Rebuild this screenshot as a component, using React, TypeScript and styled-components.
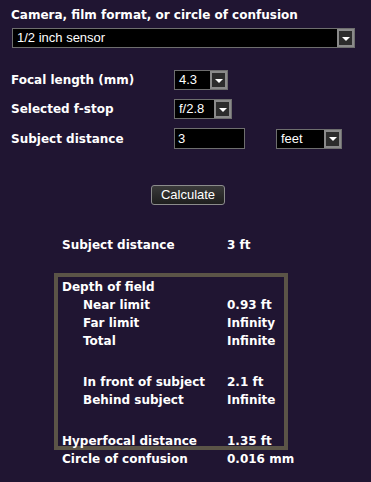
import React from "react";
import styled, { createGlobalStyle } from "styled-components";

const GlobalStyle = createGlobalStyle`
  html, body {
    margin: 0;
    padding: 0;
    background: #201532;
  }
  body {
    font-family: "DejaVu Sans", Verdana, sans-serif;
    color: #ffffff;
  }
`;

const Page = styled.div`
  width: 371px;
  height: 482px;
  box-sizing: border-box;
  padding: 7px 0 0 11px;
  overflow: hidden;
`;

const Label = styled.div`
  font-size: 12px;
  font-weight: bold;
  line-height: 16px;
  white-space: nowrap;
`;

const SelectBox = styled.div<{ $width: number }>`
  display: flex;
  align-items: stretch;
  width: ${(p) => p.$width}px;
  height: 20px;
  box-sizing: border-box;
  border: 1px solid #6e6e6e;
  background: #000;
`;

const SelectText = styled.div`
  flex: 1;
  padding-left: 4px;
  font-family: "Liberation Sans", Arial, sans-serif;
  font-size: 13px;
  line-height: 18px;
  color: #fff;
  white-space: nowrap;
  overflow: hidden;
`;

const Arrow = styled.div`
  width: 17px;
  box-sizing: border-box;
  border: 2px solid #8a8a8a;
  background: #2c2c2c;
  display: flex;
  align-items: center;
  justify-content: center;
  &::after {
    content: "";
    border-left: 4px solid transparent;
    border-right: 4px solid transparent;
    border-top: 4px solid #fff;
    margin-top: 1px;
  }
`;

const TextInput = styled.div`
  width: 71px;
  height: 21px;
  box-sizing: border-box;
  border: 1px solid #6e6e6e;
  background: #000;
  padding-left: 3px;
  font-family: "Liberation Sans", Arial, sans-serif;
  font-size: 13px;
  line-height: 19px;
`;

const CameraSelect = styled.div`
  margin: 5px 0 0 1px;
`;

const FormGrid = styled.div`
  display: grid;
  grid-template-columns: 163px auto;
  row-gap: 9px;
  margin-top: 22px;
  align-items: center;
`;

const DistanceControls = styled.div`
  display: flex;
  align-items: center;
  gap: 31px;
`;

const ButtonRow = styled.div`
  margin: 35px 0 0 140px;
`;

const Button = styled.div`
  display: inline-block;
  width: 74px;
  height: 20px;
  box-sizing: border-box;
  border: 1px solid #8c8c8c;
  border-radius: 3px;
  background: linear-gradient(#3a3a3a, #1e1e1e);
  font-family: "Liberation Sans", Arial, sans-serif;
  font-size: 13px;
  line-height: 18px;
  text-align: center;
  color: #fff;
`;

const Results = styled.div`
  margin: 31px 0 0 43px;
  width: 234px;
`;

const Row = styled.div<{ $indent?: boolean }>`
  display: grid;
  grid-template-columns: ${(p) => (p.$indent ? "21px 144px" : "0 165px")} auto;
  height: 18px;
  font-size: 12px;
  font-weight: bold;
  line-height: 18px;
  white-space: nowrap;
  padding-left: 8px;
`;

const Spacer = styled.div<{ $h: number }>`
  height: ${(p) => p.$h}px;
`;

const DofBox = styled.div`
  margin-top: 19px;
  border: 4px solid #5b5447;
  padding: 1px 0 0 0;
  height: 177px;
  box-sizing: border-box;
  & > div {
    padding-left: 4px;
  }
`;

function Select({ value, width }: { value: string; width: number }) {
  return (
    <SelectBox $width={width}>
      <SelectText>{value}</SelectText>
      <Arrow />
    </SelectBox>
  );
}

function ResultRow({ label, value, indent }: { label: string; value?: string; indent?: boolean }) {
  return (
    <Row $indent={indent}>
      <span />
      <span>{label}</span>
      <span>{value}</span>
    </Row>
  );
}

export default function App() {
  return (
    <>
      <GlobalStyle />
      <Page>
        <Label>Camera, film format, or circle of confusion</Label>
        <CameraSelect>
          <Select value="1/2 inch sensor" width={343} />
        </CameraSelect>

        <FormGrid>
          <Label>Focal length (mm)</Label>
          <Select value="4.3" width={54} />
          <Label>Selected f-stop</Label>
          <Select value="f/2.8" width={58} />
          <Label>Subject distance</Label>
          <DistanceControls>
            <TextInput>3</TextInput>
            <Select value="feet" width={66} />
          </DistanceControls>
        </FormGrid>

        <ButtonRow>
          <Button>Calculate</Button>
        </ButtonRow>

        <Results>
          <ResultRow label="Subject distance" value="3 ft" />
          <DofBox>
            <ResultRow label="Depth of field" />
            <ResultRow indent label="Near limit" value="0.93 ft" />
            <ResultRow indent label="Far limit" value="Infinity" />
            <ResultRow indent label="Total" value="Infinite" />
            <Spacer $h={23} />
            <ResultRow indent label="In front of subject" value="2.1 ft" />
            <ResultRow indent label="Behind subject" value="Infinite" />
            <Spacer $h={23} />
            <ResultRow label="Hyperfocal distance" value="1.35 ft" />
          </DofBox>
          <ResultRow label="Circle of confusion" value="0.016 mm" />
        </Results>
      </Page>
    </>
  );
}
